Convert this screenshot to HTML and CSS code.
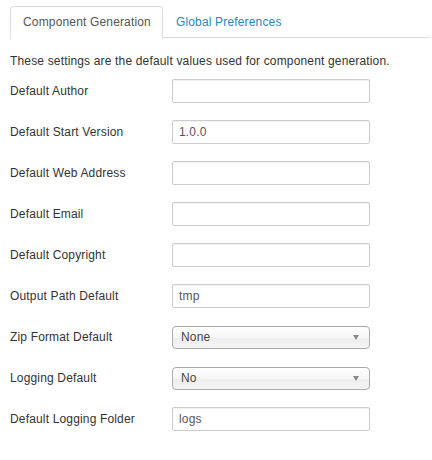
FILE: index.html
```html
<!DOCTYPE html>
<html>
<head>
<meta charset="utf-8">
<link rel="stylesheet" href="styles.css">
</head>
<body>
<div class="page">
  <ul class="tabs">
    <li class="tab active">Component Generation</li>
    <li class="tab">Global Preferences</li>
  </ul>
  <p class="desc">These settings are the default values used for component generation.</p>
  <div class="form">
    <div class="row"><label class="lbl">Default Author</label><div class="field"></div></div>
    <div class="row"><label class="lbl">Default Start Version</label><div class="field">1.0.0</div></div>
    <div class="row"><label class="lbl">Default Web Address</label><div class="field"></div></div>
    <div class="row"><label class="lbl">Default Email</label><div class="field"></div></div>
    <div class="row"><label class="lbl">Default Copyright</label><div class="field"></div></div>
    <div class="row"><label class="lbl">Output Path Default</label><div class="field">tmp</div></div>
    <div class="row"><label class="lbl">Zip Format Default</label><div class="select"><span>None</span><span class="arrow"></span></div></div>
    <div class="row"><label class="lbl">Logging Default</label><div class="select"><span>No</span><span class="arrow"></span></div></div>
    <div class="row"><label class="lbl">Default Logging Folder</label><div class="field">logs</div></div>
  </div>
</div>
</body>
</html>
```
FILE: styles.css
```css
html, body {
  margin: 0;
  padding: 0;
  background: #fff;
}
body {
  font-family: "Liberation Sans", Arial, sans-serif;
  font-size: 12px;
  letter-spacing: 0.16px;
  color: #333;
}
.page {
  padding: 6px 2px 0 10px;
}
.tabs {
  list-style: none;
  margin: 0;
  padding: 0;
  display: flex;
  border-bottom: 1px solid #ddd;
  height: 31px;
}
.tab {
  padding: 0 11px 0 12px;
  line-height: 31px;
  color: #2a87b8;
  border: 1px solid transparent;
  border-bottom: none;
  border-radius: 4px 4px 0 0;
  margin-bottom: -1px;
  height: 31px;
}
.tab.active {
  color: #555;
  border-color: #ddd;
  background: #fff;
  height: 32px;
}
.desc {
  margin: 16px 0 0;
  line-height: 14px;
}
.form {
  display: flex;
  flex-direction: column;
  gap: 17px;
  margin-top: 11px;
}
.row {
  display: flex;
  align-items: center;
  height: 24px;
}
.lbl {
  width: 162px;
  flex: none;
}
.field {
  box-sizing: border-box;
  width: 198px;
  height: 24px;
  border: 1px solid #ccc;
  border-radius: 2px;
  padding: 0 6px;
  line-height: 22px;
  color: #555;
  box-shadow: inset 0 1px 1px rgba(0,0,0,0.06);
}
.select {
  box-sizing: border-box;
  width: 198px;
  height: 23px;
  border: 1px solid #aaa;
  border-radius: 4px;
  padding: 0 8px 0 8px;
  line-height: 21px;
  color: #444;
  display: flex;
  justify-content: space-between;
  align-items: center;
  background: linear-gradient(#fff 0%, #f6f6f6 50%, #eee 52%, #f4f4f4 100%);
}
.arrow {
  width: 0;
  height: 0;
  border-left: 3px solid transparent;
  border-right: 3px solid transparent;
  border-top: 5px solid #888;
  margin-right: 2px;
}
```
